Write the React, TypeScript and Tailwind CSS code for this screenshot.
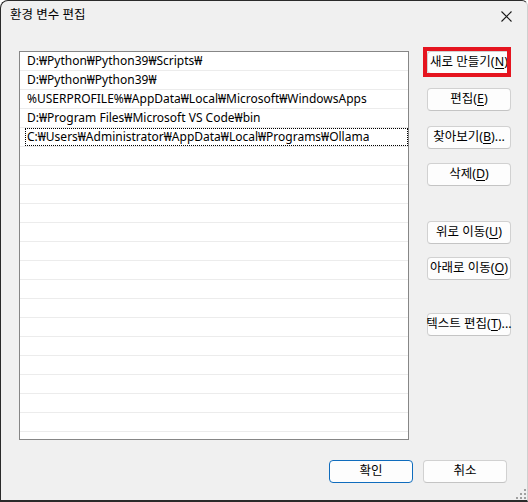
import React from "react"

const paths = [
  "D:₩Python₩Python39₩Scripts₩",
  "D:₩Python₩Python39₩",
  "%USERPROFILE%₩AppData₩Local₩Microsoft₩WindowsApps",
  "D:₩Program Files₩Microsoft VS Code₩bin",
  "C:₩Users₩Administrator₩AppData₩Local₩Programs₩Ollama",
]

function Btn({
  label,
  mn,
  tail = "",
  className = "",
  primary = false,
}: {
  label: string
  mn: string
  tail?: string
  className?: string
  primary?: boolean
}) {
  return (
    <button
      className={`relative h-[23px] w-[84px] rounded-[4px] border bg-[#fdfdfd] text-[12.5px] leading-none text-black flex items-center justify-center whitespace-nowrap ${
        primary ? "border-[#0f6cbd]" : "border-[#d1d1d1] border-b-[#c4c4c4]"
      } ${className}`}
    >
      {label}
      {mn && (
        <>
          (<span className="underline underline-offset-2">{mn}</span>)
        </>
      )}
      {tail}
    </button>
  )
}

export default function App() {
  const rows = Array.from({ length: 21 }, (_, i) => paths[i] ?? "")

  return (
    <div
      className="relative flex h-[502px] w-[528px] flex-col overflow-hidden rounded-tl-[8px] rounded-tr-[6px] border-b-2 border-l border-r border-t border-b-[#2a2a2a] border-l-[#2a2a2a] border-r-[#cfcfcf] border-t-[#2a2a2a] bg-[#f0f0f0] text-black"
      style={{ fontFamily: '"Noto Sans", "Noto Sans CJK KR", sans-serif' }}
    >
      {/* title bar */}
      <div className="flex h-[29px] items-center justify-between pl-[9px] pr-[15px]">
        <span className="text-[12.5px]">환경 변수 편집</span>
        <svg width="11" height="11" viewBox="0 0 11 11" className="mt-[1px]">
          <path d="M0.5 0.5 L10.5 10.5 M10.5 0.5 L0.5 10.5" stroke="#1a1a1a" strokeWidth="1.1" />
        </svg>
      </div>

      <div className="flex pl-[18px] pt-[21px]">
        {/* list */}
        <div className="h-[389px] w-[390px] overflow-hidden border border-[#868686] bg-white">
          {rows.map((p, i) => (
            <div
              key={i}
              className="relative flex h-[19px] items-center border-b border-[#ececec] pl-[7px] text-[12px] leading-none whitespace-nowrap"
            >
              {p}
              {i === 4 && (
                <div className="absolute bottom-0 left-[5px] right-0 top-0 border border-dotted border-black" />
              )}
            </div>
          ))}
        </div>

        {/* side buttons */}
        <div className="ml-[18px] flex flex-col">
          <div className="relative">
            <Btn label="새로 만들기" mn="N" />
            <div className="pointer-events-none absolute -bottom-[3px] -left-[4px] -top-[4px] right-0 border-4 border-[#e5141f]" />
          </div>
          <Btn label="편집" mn="E" className="mt-[14px]" />
          <Btn label="찾아보기" mn="B" tail="..." className="mt-[15px]" />
          <Btn label="삭제" mn="D" className="mt-[14px]" />
          <Btn label="위로 이동" mn="U" className="mt-[35px]" />
          <Btn label="아래로 이동" mn="O" className="mt-[13px]" />
          <Btn label="텍스트 편집" mn="T" tail="..." className="mt-[33px]" />
        </div>
      </div>

      {/* bottom buttons */}
      <div className="mt-[20px] flex justify-end gap-[10px] pr-[20px]">
        <Btn label="확인" mn="" primary />
        <Btn label="취소" mn="" />
      </div>

      {/* resize grip */}
      <svg width="10" height="10" viewBox="0 0 10 10" className="absolute bottom-[1px] right-[1px]">
        <g fill="#a0a0a0">
          <rect x="8" y="0" width="2" height="2" />
          <rect x="4" y="4" width="2" height="2" />
          <rect x="8" y="4" width="2" height="2" />
          <rect x="0" y="8" width="2" height="2" />
          <rect x="4" y="8" width="2" height="2" />
          <rect x="8" y="8" width="2" height="2" />
        </g>
      </svg>
    </div>
  )
}
